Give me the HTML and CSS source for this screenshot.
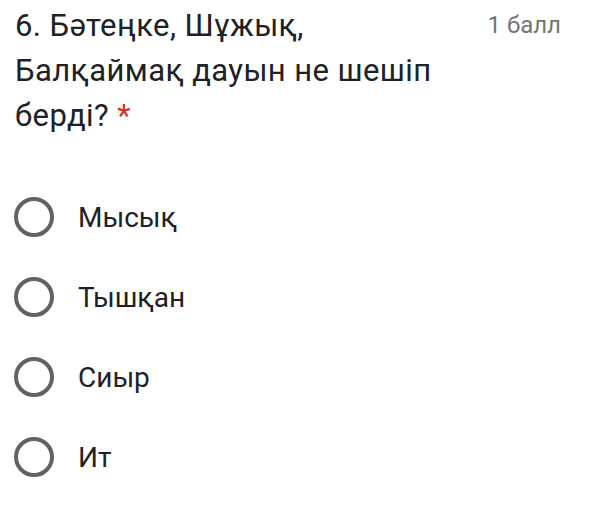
FILE: index.html
```html
<!DOCTYPE html>
<html lang="kk">
<head>
  <meta charset="UTF-8" />
  <meta name="viewport" content="width=device-width, initial-scale=1.0" />
  <title>Сұрақ 6</title>
  <link rel="stylesheet" href="styles.css">
</head>
<body>
  <div class="question">
    <div class="question-head">
      <div class="question-title">6. Бәтеңке, Шұжық, Балқаймақ дауын не шешіп берді? <span class="required">*</span></div>
      <div class="points">1 балл</div>
    </div>

    <div class="options">
      <label class="option"><span class="radio"></span><span class="option-text">Мысық</span></label>
      <label class="option"><span class="radio"></span><span class="option-text">Тышқан</span></label>
      <label class="option"><span class="radio"></span><span class="option-text">Сиыр</span></label>
      <label class="option"><span class="radio"></span><span class="option-text">Ит</span></label>
    </div>
  </div>
</body>
</html>
```

FILE: styles.css
```css
:root {
  --bg: #ffffff;
  --text: #202124;
  --subtle: #70757a;
  --radio: #5f6368;
  --required: #d93025;
}

body {
  margin: 0;
  background-color: var(--bg);
  color: var(--text);
  font-family: Roboto, "Noto Sans", Arial, sans-serif;
}

.question {
  padding: 3px 32px 0 15px;
}

.question-head {
  display: flex;
  justify-content: space-between;
  align-items: flex-start;
}

.question-title {
  width: 440px;
  font-size: 31px;
  letter-spacing: 0.4px;
  line-height: 45px;
}

.required {
  color: var(--required);
}

.points {
  font-size: 24px;
  line-height: 45px;
  color: var(--subtle);
}

.options {
  margin-top: 39px;
}

.option {
  display: flex;
  align-items: center;
  height: 80px;
}

.radio {
  width: 32px;
  height: 32px;
  border: 4px solid var(--radio);
  border-radius: 50%;
  margin-left: -1px;
  flex-shrink: 0;
}

.option-text {
  margin-left: 24px;
  font-size: 28px;
}
```
